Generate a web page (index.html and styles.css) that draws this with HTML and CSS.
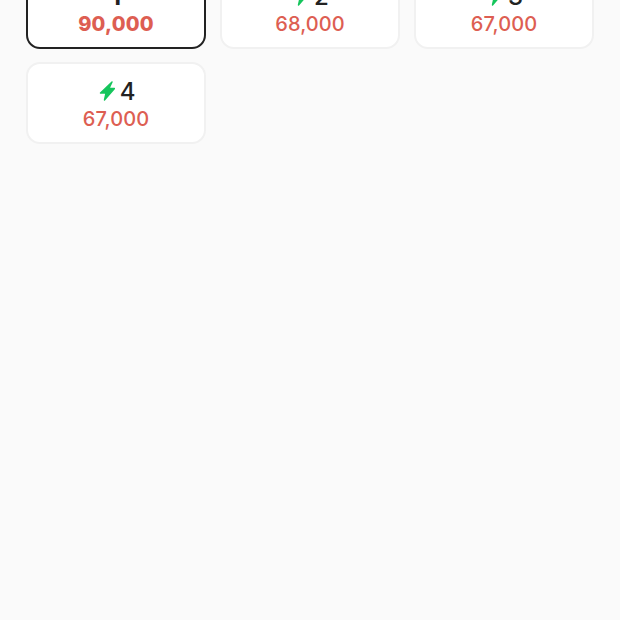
FILE: index.html
```html
<!DOCTYPE html>
<html lang="en">
<head>
    <meta charset="UTF-8">
    <title>Options</title>
    <link rel="stylesheet" href="styles.css">
</head>
<body>
    <div class="option-grid">
        <div class="option-card selected">
            <div class="option-name">1</div>
            <div class="option-price">90,000</div>
        </div>
        <div class="option-card">
            <div class="option-name"><svg class="bolt" viewBox="0 0 18 20"><path d="M15 1 3.5 12h5.5L7.5 19 17.5 7.5H12L15 1Z"/></svg>2</div>
            <div class="option-price">68,000</div>
        </div>
        <div class="option-card">
            <div class="option-name"><svg class="bolt" viewBox="0 0 18 20"><path d="M15 1 3.5 12h5.5L7.5 19 17.5 7.5H12L15 1Z"/></svg>3</div>
            <div class="option-price">67,000</div>
        </div>
        <div class="option-card">
            <div class="option-name"><svg class="bolt" viewBox="0 0 18 20"><path d="M15 1 3.5 12h5.5L7.5 19 17.5 7.5H12L15 1Z"/></svg>4</div>
            <div class="option-price">67,000</div>
        </div>
    </div>
</body>
</html>
```

FILE: styles.css
```css
html, body {
    height: 100%;
    overflow: hidden;
}
body {
    margin: 0;
    background-color: #fafafa;
    font-family: Inter, "Liberation Sans", sans-serif;
    color: #222;
}
.option-grid {
    display: grid;
    grid-template-columns: repeat(3, 180px);
    column-gap: 14px;
    row-gap: 13px;
    padding: 0 26px;
    margin-top: -33px; /* page is scrolled */
}
.option-card {
    height: 82px;
    box-sizing: border-box;
    padding-top: 13px;
    background-color: #fff;
    border: 2px solid #f1f1f1;
    border-radius: 14px;
    text-align: center;
}
.option-card.selected {
    border-color: #222;
}
.option-name {
    display: flex;
    justify-content: center;
    align-items: center;
    gap: 5px;
    height: 28px;
    font-size: 24px;
    font-weight: 500;
}
.selected .option-name {
    font-weight: 700;
}
.bolt {
    width: 18px;
    height: 20px;
    fill: #16c55c;
    stroke: #16c55c;
    stroke-width: 1.4;
    stroke-linejoin: round;
}
.option-price {
    margin-top: 1px;
    font-size: 20px;
    line-height: 26px;
    font-weight: 500;
    letter-spacing: 0.1px;
    color: #dd5e52;
}
.selected .option-price {
    font-weight: 800;
    letter-spacing: 0.2px;
}
```
